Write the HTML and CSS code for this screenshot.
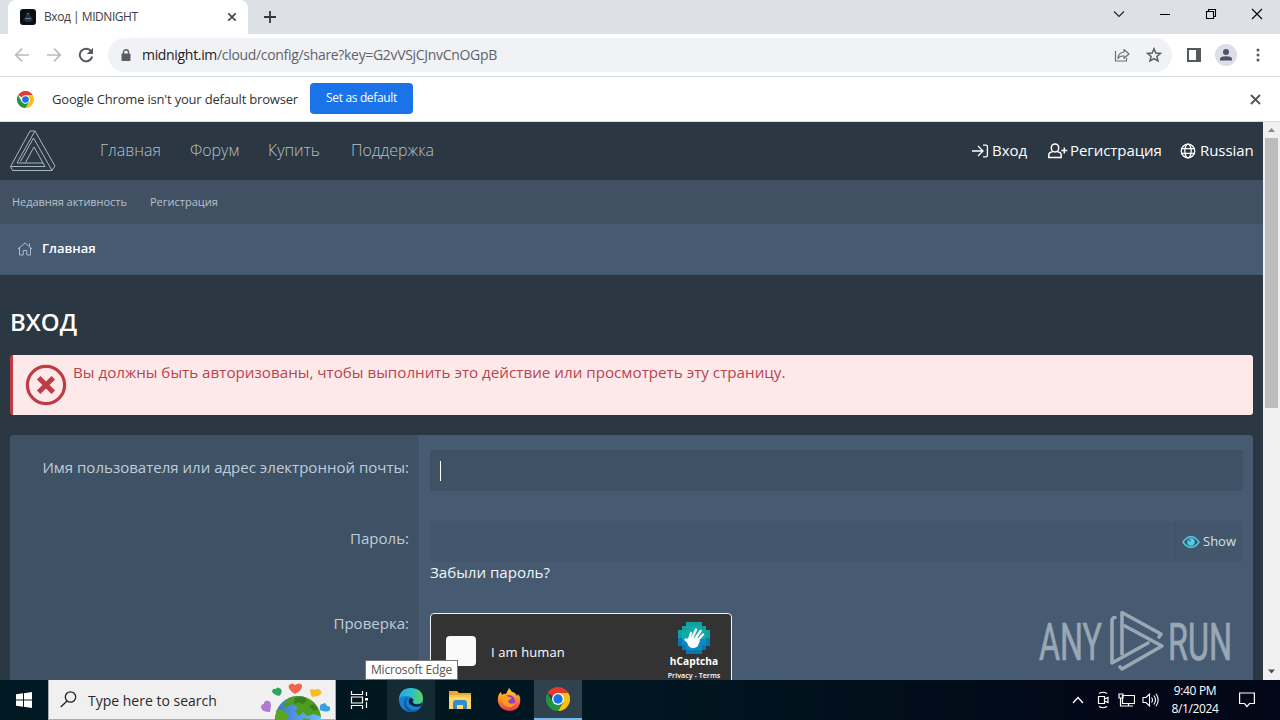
FILE: index.html
```html
<!DOCTYPE html>
<html lang="ru">
<head>
<meta charset="utf-8">
<title>Вход | MIDNIGHT</title>
<link rel="stylesheet" href="styles.css">
</head>
<body>
<svg width="0" height="0" class="defs" aria-hidden="true">
  <symbol id="chrome" viewBox="0 0 48 48">
    <path fill="#e33b2e" d="M24 24 3.2 12A24 24 0 0 1 44.8 12L24 12Z"/>
    <path fill="#fbc116" d="M24 12H44.8A24 24 0 0 1 24 48L34.4 30Z"/>
    <path fill="#229342" d="M3.2 12A24 24 0 0 0 24 48L34.4 30 24 34 13.6 30Z"/>
    <circle cx="24" cy="24" r="12" fill="#fff"/>
    <circle cx="24" cy="24" r="9.4" fill="#1a73e8"/>
  </symbol>
</svg>
<div class="screen">
  <header class="tabstrip">
    <div class="tab">
      <svg class="favicon" width="16" height="16" viewBox="0 0 16 16"><rect width="16" height="16" rx="3" fill="#0b1016"/><path d="M4 11 7 4h2l4 7-3 2H6z" fill="#27323f"/><path d="M7 4.5h2M5 9.5h6" stroke="#7893a9" stroke-width=".8"/></svg>
      <span class="tab-title">Вход | MIDNIGHT</span>
      <svg width="10" height="10" viewBox="0 0 10 10"><path d="M1.3 1.3l7.4 7.4M8.7 1.3 1.3 8.7" stroke="#45484c" stroke-width="1.7"/></svg>
    </div>
    <svg class="newtab" width="12" height="12" viewBox="0 0 12 12"><path d="M6 0v12M0 6h12" stroke="#33363a" stroke-width="1.8"/></svg>
    <div class="winbtns">
      <svg width="12" height="12" viewBox="0 0 12 12"><path d="M1 3.5l5 5 5-5" fill="none" stroke="#222" stroke-width="1.1"/></svg>
      <svg width="12" height="12" viewBox="0 0 12 12"><path d="M1 6.5h10" stroke="#000"/></svg>
      <svg width="12" height="12" viewBox="0 0 12 12"><path d="M1.500 3.500h7v7h-7zM3.500 3.500v-2h7v7h-2" fill="none" stroke="#000" stroke-width="1.1"/></svg>
      <svg width="12" height="12" viewBox="0 0 12 12"><path d="M1 1l10 10M11 1 1 11" stroke="#000" stroke-width="1.1"/></svg>
    </div>
  </header>
  <div class="toolbar">
    <svg class="back" width="16" height="16" viewBox="0 0 16 16"><path d="M15 8H2M8 1.700 1.700 8 8 14.300" fill="none" stroke="#b9bbbe" stroke-width="1.7"/></svg>
    <svg class="fwd" width="16" height="16" viewBox="0 0 16 16"><path d="M1 8h13M8 1.700 14.300 8 8 14.300" fill="none" stroke="#b9bbbe" stroke-width="1.7"/></svg>
    <svg class="reload" width="16" height="16" viewBox="0 0 16 16"><path d="M13.200 4.300A6.300 6.300 0 1 0 14.200 9.500" fill="none" stroke="#55585c" stroke-width="2"/><path d="M15 .8V7H8.800z" fill="#55585c"/></svg>
    <div class="omnibox">
      <svg width="10" height="13" viewBox="0 0 10 13"><rect x=".5" y="4.500" width="9" height="7.500" rx="1" fill="#5a5d61"/><path d="M2.500 5V3.300a2.500 2.500 0 0 1 5 0V5" fill="none" stroke="#5a5d61" stroke-width="1.400"/></svg>
      <span class="url"><b>midnight.im</b>/cloud/config/share?key=G2vVSjCJnvCnOGpB</span>
      <svg class="share" width="16" height="16" viewBox="0 0 16 16"><path d="M1.500 4v10h11v-3" fill="none" stroke="#6b6e72" stroke-width="1.200"/><path d="M10 2.500 15 7l-5 4.300V9Q6 8.700 4 11.500 4.500 5.500 10 5z" fill="none" stroke="#6b6e72" stroke-width="1.200" stroke-linejoin="round"/></svg>
      <svg width="16" height="16" viewBox="0 0 16 16"><path d="M8 1.800 9.800 6l4.600.4-3.500 3 1.100 4.500L8 11.500 4 13.900l1.100-4.500-3.500-3L6.200 6z" fill="none" stroke="#5b5e62" stroke-width="1.500"/></svg>
    </div>
    <svg class="panel" width="14" height="14" viewBox="0 0 14 14"><path d="M1 1h12v12H1z" fill="#fff" stroke="#55595d" stroke-width="2"/><path d="M9 1h4v12H9z" fill="#55595d"/></svg>
    <svg class="avatar" width="22" height="22" viewBox="0 0 22 22"><circle cx="11" cy="11" r="11" fill="#dcdfe8"/><circle cx="11" cy="8" r="3" fill="#4c5468"/><path d="M5 16.500v-1.400q0-2.800 6-2.800t6 2.800v1.400z" fill="#4c5468"/></svg>
    <svg class="dots" width="4" height="14" viewBox="0 0 4 14"><g fill="#55585c"><circle cx="2" cy="2" r="1.500"/><circle cx="2" cy="7" r="1.500"/><circle cx="2" cy="12" r="1.500"/></g></svg>
  </div>
  <div class="infobar">
    <svg width="17" height="17"><use href="#chrome"/></svg>
    <span class="info-text">Google Chrome isn't your default browser</span>
    <span class="default-btn">Set as default</span>
    <svg class="info-close" width="11" height="11" viewBox="0 0 11 11"><path d="M1 1l9 9M10 1l-9 9" stroke="#505357" stroke-width="1.800"/></svg>
  </div>

  <div class="viewport">
    <main class="page">
      <nav class="mainnav">
        <svg class="logo" width="46" height="42" viewBox="0 0 46 42"><path fill="none" stroke="#a9b8c0" stroke-linejoin="round" d="M20 1h5l20 35-3 4.500H2.500L.6 36.500zM25 1 7 33h26M.6 36.500H35L24 17 15.500 32.500M42 40.500 23.500 8 10.500 31.500"/></svg>
        <a class="n1">Главная</a><a class="n2">Форум</a><a class="n3">Купить</a><a class="n4">Поддержка</a>
        <div class="account">
          <a class="a1"><svg width="17" height="14" viewBox="0 0 17 14"><path d="M0 7h10.500M6 2l5 5-5 5M11 1.200h3q1.400 0 1.400 1.400v8.800q0 1.400-1.400 1.400h-3" fill="none" stroke="#fff" stroke-width="1.300"/></svg><span>Вход</span></a>
          <a class="a2"><svg width="20" height="16" viewBox="0 0 20 16"><g fill="none" stroke="#fff" stroke-width="1.500"><ellipse cx="7" cy="4.900" rx="3.700" ry="4"/><path d="M4.800 8.800Q.8 9.300.8 12v2.500h12.400V12q0-2.700-4-3.200M13.300 7.500h6M16.300 4.500v6"/></g></svg><span>Регистрация</span></a>
          <a class="a3"><svg width="16" height="16" viewBox="0 0 16 16"><g fill="none" stroke="#fff" stroke-width="1.300"><circle cx="8" cy="8" r="6.800"/><ellipse cx="8" cy="8" rx="3.200" ry="6.800"/><path d="M1.500 5.700h13M1.500 10.300h13"/></g></svg><span>Russian</span></a>
        </div>
      </nav>
      <div class="subnav"><a class="s1">Недавняя активность</a><a class="s2">Регистрация</a></div>
      <div class="crumbs">
        <svg width="16" height="14" viewBox="0 0 16 14"><path d="M.8 7 8 1l7.200 6M2.500 6v7h3.700V8.500h3.600V13h3.700V6M12.500 4V1.500" fill="none" stroke="#a9bccd" stroke-width="1"/></svg>
        <span>Главная</span>
      </div>
      <h1>ВХОД</h1>
      <div class="alert">
        <svg width="42" height="42" viewBox="0 0 42 42"><circle cx="21" cy="21" r="18.600" fill="none" stroke="#bf3c47" stroke-width="3.200"/><path d="M13.700 13.700l14.600 14.600M28.300 13.700 13.700 28.300" stroke="#bf3c47" stroke-width="5"/></svg>
        <span>Вы должны быть авторизованы, чтобы выполнить это действие или просмотреть эту страницу.</span>
      </div>
      <form class="form">
        <div class="labels">
          <label class="l1"><span>Имя пользователя или адрес электронной почты:</span></label>
          <label class="l2"><span>Пароль:</span></label>
          <label class="l3"><span>Проверка:</span></label>
        </div>
        <div class="fields">
          <div class="input"><i class="caret"></i></div>
          <div class="input password">
            <div class="show"><svg width="18" height="14" viewBox="0 0 18 14"><path d="M1 7q3.500-5.300 8-5.300T17 7q-3.500 5.300-8 5.300T1 7z" fill="none" stroke="#4dcfe6" stroke-width="1.400"/><circle cx="9" cy="7" r="3.700" fill="#4dcfe6"/><path d="M6 5.500 8.500 4v2.500z" fill="#315a70"/></svg><span>Show</span></div>
          </div>
          <a class="forgot">Забыли пароль?</a>
          <div class="captcha">
            <i class="box"></i><span class="human">I am human</span>
            <div class="brand">
              <svg width="34" height="32" viewBox="0 0 34 32"><path fill="#169f9f" d="M9 0h16v4h4v4h4v8H1V8h4V4h4z"/><path fill="#0878b4" d="M1 16h32v8h-4v4h-4v4H9v-4H5v-4H1z"/><path fill="#12a9a6" d="M9 4h16v5h4v9H5V9h4z"/><path fill="#0b8bc0" d="M5 17h24v6h-4v5H9v-5H5z"/><path fill="none" stroke="#fff" stroke-width="2.400" stroke-linecap="round" d="M12 18l2-7M15 16.500l4-9M18 17l5.500-8M20 19l6-6.500M12.500 21l-4-3.500"/><path fill="#fff" d="M11 16l10 0 2 3-2.500 5.500Q15 28 11.500 24L9 18z"/></svg>
              <strong>hCaptcha</strong><small>Privacy - Terms</small>
            </div>
          </div>
        </div>
      </form>
    </main>
    <div class="scrollbar">
      <svg width="17" height="16" viewBox="0 0 17 16"><path d="M5 10h7L8.500 6z" fill="#8b8b8b"/></svg>
      <i class="thumb"></i>
      <svg class="down" width="17" height="17" viewBox="0 0 17 17"><path d="M5 6.500h7l-3.500 4z" fill="#505050"/></svg>
    </div>
  </div>

  <footer class="taskbar">
    <div class="start"><svg width="16" height="16" viewBox="0 0 16 16"><path fill="#fff" d="M0 2.300 7 1.300v6.200H0zM8 1.200 16 0v7.500H8zM0 8.500h7v6.200l-7-1zM8 8.500h8V16l-8-1.200z"/></svg></div>
    <div class="search">
      <svg class="lens" width="17" height="17" viewBox="0 0 17 17"><circle cx="10.500" cy="6" r="5.200" fill="none" stroke="#222" stroke-width="1.300"/><path d="M7 10 .8 16" stroke="#222" stroke-width="1.300"/></svg>
      <span>Type here to search</span>
      <svg class="earth" width="74" height="40" viewBox="0 0 74 40">
        <defs><linearGradient id="sea"><stop stop-color="#3974d4"/><stop offset="1" stop-color="#6dbcf5"/></linearGradient><clipPath id="globe"><circle cx="37" cy="39" r="23"/></clipPath></defs>
        <circle cx="37" cy="39" r="23" fill="url(#sea)"/>
        <g clip-path="url(#globe)"><path fill="#4f9d20" d="M22 24l8-8h20l11 13-1 8-7-3-7 2-4-4-4 4-4-5 3-4-6-3-7 4z"/><path fill="#377f1d" d="M34 18l9-2 3 5-5 3-3-2-5 2zM48 26l5-2 4 5-4 2z"/><path fill="#5aa522" d="M15 29l7 1 6 5-2 6H15zM42 38l7 1v5h-8z"/></g>
        <path fill="#f26549" d="M34 14Q26 9 28 5q3-3 6 0 4-3 7 0 1 5-7 9z"/>
        <path fill="#f6bd26" d="M51 17Q47 9 51 9l3 1q2-2 5 0 4 3-2 6z"/>
        <path fill="#2fa45b" d="M18 16q-7-2-7-5 1-3 4-2 1-3 5 0 2 4-2 7z"/>
        <path fill="#ad7bd6" d="M9 32Q0 32 0 27q0-3 3-3 0-4 4-3 3 0 3 5z"/>
        <path fill="#37a0dd" d="M59 30q-1-7 3-6 2-3 4 2 4 0 3 4-3 3-10 0z"/>
      </svg>
    </div>
    <div class="task view"><svg width="18" height="18" viewBox="0 0 18 18"><path d="M1.500 0v3.500h11V0M1.500 18v-3.500h11V18M1.500 6h11v6h-11zM16.500 1v4M16.500 11v6" fill="none" stroke="#fff" stroke-width="1.200"/><path d="M15 7h3v2.500h-3z" fill="#fff"/></svg></div>
    <div class="task edge">
      <svg width="26" height="26" viewBox="0 0 26 26"><defs><linearGradient id="eg"><stop stop-color="#23a8df"/><stop offset=".55" stop-color="#30bfc4"/><stop offset="1" stop-color="#62d552"/></linearGradient></defs><circle cx="13" cy="13" r="12" fill="#1682d1"/><path fill="url(#eg)" d="M1 12Q2 1 13 1q11 0 12 10 0 6-7 6-4 0-3-2 2-3-2-5Q5 7 1 12z"/><path fill="#125aa0" d="M10 10Q5 17 12 22q5 3 10-1-3 5-9 4Q5 23 6 15q1-4 4-5z"/><path fill="#10232e" d="M12 11q-3 4 1 7 4 3 10 1l1-3q-3 2-7 1-3-1-2-3 1-2-3-3z"/></svg>
    </div>
    <div class="task"><svg width="22" height="20" viewBox="0 0 22 20"><path fill="#e9a72b" d="M0 1h8l2 2h12v4H0z"/><path fill="#ffd668" d="M0 5h22v14H0z"/><path fill="#f3c550" d="M0 5h22v2H0z"/><path fill="#378bc8" d="M4 19v-6q0-3 3-3h8q3 0 3 3v6h-4v-4H8v4z"/></svg></div>
    <div class="task"><svg width="24" height="24" viewBox="0 0 24 24"><defs><linearGradient id="ff" x1="0" x2="0" y1="0" y2="1"><stop stop-color="#ffd83b"/><stop offset=".5" stop-color="#ff8a28"/><stop offset="1" stop-color="#f22f58"/></linearGradient></defs><path fill="url(#ff)" d="M1 14Q0 7 4 4l1 3q2-2 4-1l3-6 3 4q3 0 5 4l1-2q3 3 2 9-2 8-11 8-9-1-11-9z"/><circle cx="12" cy="13" r="6" fill="#8b43cd"/><path fill="#ff9c22" d="M5 8q4-2 7 1l3 1-4 3q1 4 7 2-2 5-7 4-6-1-6-8z"/></svg></div>
    <div class="task active"><svg width="24" height="24"><use href="#chrome"/></svg></div>
    <div class="tray">
      <svg width="12" height="8" viewBox="0 0 12 8"><path d="M1 7l5-5.500L11 7" fill="none" stroke="#fff" stroke-width="1.300"/></svg>
      <svg class="t2" width="12" height="18" viewBox="0 0 12 18"><path d="M2 2.500q4-2.500 8 0M2 15.500q4 2.500 8 0M1.500 5.500h6v7h-6zM7.500 8l3.500-1.500v5L7.500 10" fill="none" stroke="#fff" stroke-width="1.200"/></svg>
      <svg class="t3" width="17" height="15" viewBox="0 0 17 15"><path d="M4.500 2.500h12v8h-12zM1 1h4v4H1zM2.500 5v8H15M10.500 10.500V13" fill="none" stroke="#fff" stroke-width="1.200"/></svg>
      <svg class="t4" width="17" height="16" viewBox="0 0 17 16"><path d="M1 5.500h3L7.500 2v12L4 10.500H1zM9.500 5.500q2 2.500 0 5M11.800 3.500q3.400 4.500 0 9M14 1.800q4.300 6 0 12.400" fill="none" stroke="#fff" stroke-width="1.100"/></svg>
      <div class="clock"><span>9:40 PM</span><span>8/1/2024</span></div>
      <svg class="t5" width="16" height="16" viewBox="0 0 16 16"><path d="M.6 1h14.800v10.500h-4.900L8 14.500l-2.500-3H.6z" fill="none" stroke="#fff" stroke-width="1.200"/></svg>
    </div>
  </footer>
  <div class="tooltip"><span>Microsoft Edge</span></div>
  <svg class="watermark" width="204" height="66" viewBox="0 0 204 66">
    <g fill="#dce3e8" stroke="#dce3e8" stroke-width=".7"><text x="1" y="51.500" textLength="63" lengthAdjust="spacingAndGlyphs">ANY</text><text x="130" y="51.500" textLength="64" lengthAdjust="spacingAndGlyphs">RUN</text></g>
    <g fill="none" stroke="#dce3e8" stroke-width="3.600" stroke-linejoin="round" stroke-linecap="round"><path d="M77 9.500q-3 0-3 4V55l36-20"/><path d="M84 46V4.500L123 26l-2 3M87 18l37 20-40 23-2-2"/></g>
  </svg>
</div>
</body>
</html>
```
FILE: styles.css
```css
* { box-sizing: border-box; }
body { margin: 0; overflow: hidden; font-family: "Open Sans", "Noto Sans", sans-serif; }
svg { display: block; flex: none; }
.defs { position: absolute; }
.screen { position: relative; width: 1280px; height: 720px; display: flex; flex-direction: column; overflow: hidden; white-space: nowrap; }
.screen span, .screen a { flex: none; }

.tabstrip { height: 34px; flex: none; background: #dde0e7; display: flex; align-items: center; padding-left: 8px; }
.tab { width: 240px; height: 34px; background: #fff; border-radius: 8px 8px 0 0; display: flex; align-items: center; padding: 0 11px 0 12px; }
.tab-title { margin-left: 8px; padding-bottom: 1px; font-size: 12px; color: #3c4043; flex: 1 0 0 !important; letter-spacing: -.45px; }
.newtab { margin-left: 16px; }
.winbtns { margin: -6px 17px 0 auto; display: flex; gap: 34px; }

.toolbar { height: 43px; flex: none; background: #fff; border-bottom: 1px solid #d5dcde; display: flex; align-items: center; padding-left: 14px; }
.fwd { margin-left: 16px; }
.reload { margin-left: 16px; }
.omnibox { margin-left: 14px; width: 1064px; height: 34px; border-radius: 17px; background: #f0f2f5; display: flex; align-items: center; padding: 0 10px 0 13px; }
.url { margin-left: 11px; padding-bottom: 1px; font-size: 14px; color: #5f6368; letter-spacing: -.32px; }
.url b { font-weight: 400; color: #202124; }
.share { margin: 0 16px 0 auto; }
.panel { margin-left: 15px; }
.avatar { margin-left: 14px; }
.dots { margin-left: 19px; }

.infobar { height: 45px; flex: none; background: #fff; border-bottom: 1px solid #d5dcde; display: flex; align-items: center; padding-left: 17px; }
.info-text { margin-left: 18px; width: 247px; font-size: 13px; color: #303336; letter-spacing: -.19px; }
.default-btn { margin: -1px 0 0 11px; width: 103px; height: 31px; border-radius: 4px; background: #1a73e8; color: #fff; font-size: 12px; line-height: 30px; text-align: center; letter-spacing: -.35px; }
.info-close { margin: 0 19px 0 auto; }

.viewport { height: 558px; flex: none; display: flex; }
.page { width: 1263px; background: #2b3743; display: flex; flex-direction: column; overflow: hidden; }
.mainnav { height: 58px; flex: none; display: flex; align-items: center; padding: 0 10px; color: #b5c1c9; font-size: 16px; font-weight: 300; }
.mainnav > a, .account span { padding-bottom: 2px; }
.n1 { margin-left: 44px; width: 90px; }
.n2 { width: 78px; }
.n3 { width: 83px; }
.account { margin-left: auto; display: flex; color: #fff; font-size: 15px; font-weight: 400; letter-spacing: -.06px; }
.account a { display: flex; align-items: center; }
.a1 { width: 76px; gap: 3px; }
.a2 { width: 132px; gap: 2px; }
.a3 { width: 73px; gap: 4px; }
.subnav { height: 44px; flex: none; background: #415163; display: flex; align-items: center; padding: 0 0 2px 12px; font-size: 11px; color: #b3c2cf; }
.s1 { width: 138px; letter-spacing: -.05px; }
.crumbs { height: 51px; flex: none; background: #465a72; border-bottom: 1px solid #40566a; display: flex; align-items: center; padding-left: 17px; gap: 9px; color: #fff; font-size: 13px; font-weight: 600; }
.crumbs span { padding-bottom: 2px; }
h1 { margin: 29px 0 16px 10px; height: 35px; line-height: 35px; color: #fff; font-size: 24px; font-weight: 600; }
.alert { margin: 0 10px; height: 60px; flex: none; background: #fde9e9; border-left: 3px solid #bf3c47; border-radius: 3px; display: flex; padding: 9px 12px; gap: 6px; color: #b9434e; font-size: 15.2px; line-height: 17px; }
.form { margin: 20px 10px 0; flex: 1; display: flex; background: #465a72; border-radius: 4px 4px 0 0; overflow: hidden; }
.labels { width: 410px; flex: none; background: #3f5164; border-right: 1px solid #4b6078; display: flex; flex-direction: column; align-items: flex-end; padding: 20px 10px 0 0; color: #bfcddb; font-size: 15.04px; }
.labels label { line-height: 24px; }
.l1 { height: 71px; }
.l2 { height: 85px; }
.fields { flex: 1; padding: 15px 10px 0; }
.input { height: 41px; background: #3f5164; border-radius: 2px; display: flex; align-items: center; }
.caret { width: 1px; height: 20px; margin-left: 10px; background: #fff; }
.password { margin-top: 30px; background: #43566b; justify-content: flex-end; }
.show { width: 68px; height: 41px; border-left: 1px solid #3f5266; display: flex; align-items: center; gap: 3px; padding-left: 6px; font-size: 13px; color: #d3e0ea; }
.show span { padding-bottom: 2px; }
.forgot { display: block; height: 24px; line-height: 20px; font-size: 15.1px; color: #f2f6f8; }
.captcha { margin-top: 27px; width: 302px; height: 76px; background: #333; border: 1px solid #f1f1f1; border-radius: 4px; display: flex; padding-left: 15px; }
.box { width: 30px; height: 30px; margin-top: 22px; background: #fafafa; border-radius: 4px; }
.human { margin: 28px 0 0 15px; font-size: 13px; line-height: 20px; color: #fff; width: 145px; letter-spacing: .1px; }
.brand { width: 62px; padding-top: 8px; display: flex; flex-direction: column; align-items: center; color: #fff; margin-left: 27px; }
.brand strong { font-size: 10.2px; line-height: 15px; }
.brand small { font-size: 7.2px; line-height: 12px; font-weight: 600; }
.scrollbar { width: 17px; background: #f0f0f0; display: flex; flex-direction: column; align-items: center; }
.thumb { width: 13px; height: 270px; background: #bdbdbd; }
.down { margin-top: auto; }

.taskbar { height: 40px; background: linear-gradient(90deg, #001922, #001620 50%, #020817 85%); display: flex; }
.start { width: 48px; display: flex; align-items: center; justify-content: center; }
.search { width: 288px; background: #f0f0f0; border: 1px solid #aaa; border-top: 0; display: flex; align-items: center; padding-left: 11px; color: #292929; font-size: 14px; }
.search span { margin-left: 11px; width: 173px; padding-top: 1px; }
.task { width: 49px; display: flex; align-items: center; justify-content: center; }
.view { width: 51px; padding-right: 5px; }
.edge { width: 48px; background: #142b36; }
.active { width: 48px; margin-left: 1px; background: #2f424d; border-bottom: 2px solid #75b9ed; }
.tray { margin-left: auto; display: flex; align-items: center; color: #fff; }
.t2 { margin-left: 13px; }
.t3 { margin-left: 9px; }
.t4 { margin-left: 7px; }
.clock { width: 70px; margin-left: 1px; display: flex; flex-direction: column; align-items: center; font-size: 12px; line-height: 18px; letter-spacing: -.35px; }
.t5 { margin: 0 25px 0 9px; }
.tooltip { position: absolute; left: 365px; top: 660px; width: 93px; height: 20px; background: #fff; border: 1px solid #777; color: #555; font-size: 12px; line-height: 18px; text-align: center; letter-spacing: -.15px; }
.watermark { position: absolute; left: 1038px; top: 608px; opacity: .56; font-family: Roboto, sans-serif; font-size: 52px; }
```
